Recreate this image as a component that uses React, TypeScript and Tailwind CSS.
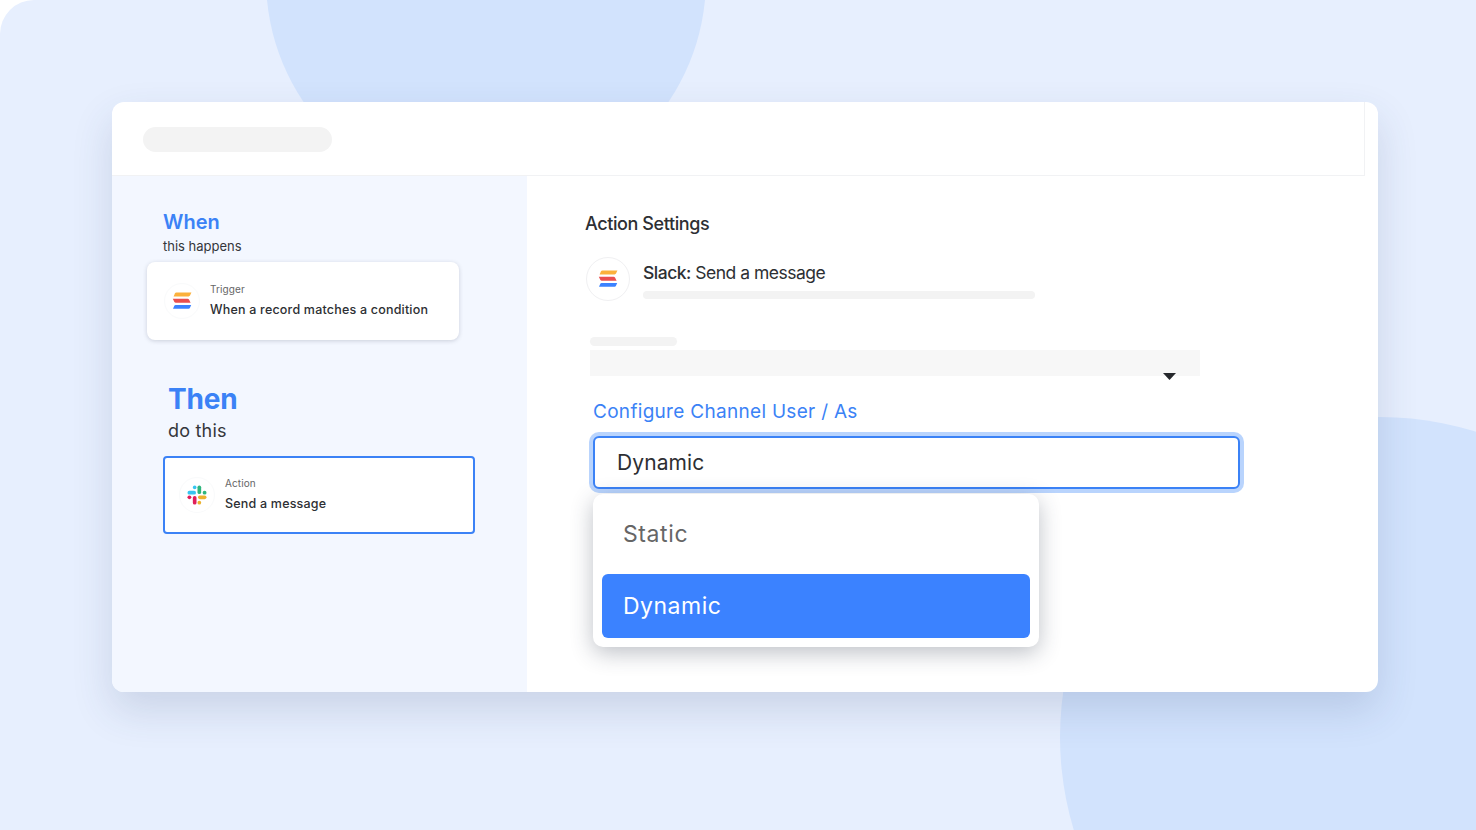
const font = { fontFamily: "Inter, 'Noto Sans', sans-serif" };

// three slanted stripes used as the trigger logo
const StripesLogo = ({ size }: { size: number }) => (
  <svg width={size} height={size} viewBox="0 0 20 20">
    <path d="M4.4 1.6 H19.4 L18 4.6 Q17.6 5.4 16.6 5.4 H1.6 L2.9 2.4 Q3.3 1.6 4.4 1.6Z" fill="#fbb13c" />
    <path d="M.8 7.8 H15.6 Q16.6 7.8 17 8.6 L18.6 11.8 H3.8 Q2.8 11.8 2.4 11 Z" fill="#ea4f4f" />
    <path d="M3.6 14 H19.2 L18 16.8 Q17.6 17.8 16.6 17.8 H1 L2.3 14.8 Q2.6 14 3.6 14Z" fill="#3b82ff" />
  </svg>
);

const SlackLogo = ({ size }: { size: number }) => (
  <svg width={size} height={size} viewBox="0 0 24 24" fill="none" strokeLinecap="round" strokeWidth="4.4">
    <path d="M2.8 9.2H8.6" stroke="#36c5f0" />
    <path d="M9.2 2.8V3" stroke="#36c5f0" />
    <path d="M14.8 2.8V8.6" stroke="#2eb67d" />
    <path d="M21.2 9.2H21" stroke="#2eb67d" />
    <path d="M15.4 14.8H21.2" stroke="#ecb22e" />
    <path d="M14.8 21.2V21" stroke="#ecb22e" />
    <path d="M9.2 15.4V21.2" stroke="#e01e5a" />
    <path d="M2.8 14.8H3" stroke="#e01e5a" />
  </svg>
);

const StepCard = ({
  label,
  title,
  icon,
  className,
}: {
  label: string;
  title: string;
  icon: React.ReactNode;
  className: string;
}) => (
  <div className={`flex items-center bg-white ${className}`}>
    <div className="flex h-9 w-9 shrink-0 items-center justify-center rounded-full border border-gray-50 bg-white">
      {icon}
    </div>
    <div className="ml-[10px] flex flex-col pb-[3px]">
      <span className="text-[10px] leading-[14px] tracking-[0.1px] text-[#666]">{label}</span>
      <span className="mt-[6px] text-[12.5px] leading-[16px] font-medium tracking-[0.2px] text-[#2d2f33]">{title}</span>
    </div>
  </div>
);

export default function App() {
  return (
    <div className="relative h-[830px] w-[1476px] overflow-hidden bg-white" style={font}>
      <div className="absolute inset-0 rounded-tl-[34px] bg-[#e7effe]" />
      <div className="absolute top-[-241px] left-[266px] h-[440px] w-[440px] rounded-full bg-[#d2e3fd]" />
      <div className="absolute top-[417px] left-[1060px] h-[640px] w-[640px] rounded-full bg-[#d2e3fd]" />

      <div className="relative pt-[102px] pl-[112px]">
        <div className="flex h-[590px] w-[1266px] flex-col overflow-hidden rounded-[12px] bg-white shadow-[0_18px_40px_rgba(50,70,110,0.16)]">
          <header className="mr-[13px] flex h-[74px] shrink-0 items-center border-r border-b border-[#f1f2f4] pt-[2px] pl-[31px]">
            <div className="h-[25px] w-[189px] rounded-full bg-[#f3f3f3]" />
          </header>

          <div className="flex min-h-0 flex-1">
            <aside className="w-[415px] shrink-0 bg-[#f3f7ff]">
              <div className="pt-[33px] pl-[51px]">
                <h2 className="text-[20px] leading-[26px] font-semibold text-[#3b82f6]">When</h2>
                <p className="mt-[3px] text-[13px] leading-[16px] text-[#33363b]">this happens</p>
              </div>
              <StepCard
                label="Trigger"
                title="When a record matches a condition"
                icon={<StripesLogo size={20} />}
                className="mt-[8px] ml-[35px] h-[78px] w-[312px] rounded-[8px] pl-[17px] shadow-[0_1px_4px_rgba(60,70,90,0.22)]"
              />
              <div className="mt-[42px] pl-[56px]">
                <h2 className="text-[28px] leading-[34px] font-bold tracking-[-0.2px] text-[#3b82f6]">Then</h2>
                <p className="mt-[4px] text-[18px] leading-[22px] tracking-[0.2px] text-[#33363b]">do this</p>
              </div>
              <StepCard
                label="Action"
                title="Send a message"
                icon={<SlackLogo size={20} />}
                className="mt-[14px] ml-[51px] h-[78px] w-[312px] rounded-[4px] border-2 border-[#3b82f6] pl-[14px]"
              />
            </aside>

            <main className="flex-1 pt-[36px] pl-[59px]">
              <h3 className="-ml-px text-[18px] leading-[24px] font-medium tracking-[-0.4px] text-[#2d2f33]">Action Settings</h3>

              <div className="mt-[21px] flex">
                <div className="flex h-[44px] w-[44px] items-center justify-center rounded-full border border-[#f0f0f2]">
                  <StripesLogo size={20} />
                </div>
                <div className="ml-[13px] pt-[4px]">
                  <p className="text-[17.5px] leading-[24px] tracking-[-0.5px] text-[#2d2f33]">
                    <span className="font-medium">Slack:</span> Send a message
                  </p>
                  <div className="mt-[6px] h-[8px] w-[392px] rounded-full bg-[#f3f3f3]" />
                </div>
              </div>

              <div className="mt-[36px] ml-[4px] h-[9px] w-[87px] rounded-full bg-[#f3f3f3]" />
              <div className="relative mt-[4px] ml-[4px] h-[26px] w-[610px] bg-[#f7f7f7]">
                <svg className="absolute top-[23px] left-[573px]" width="13" height="7" viewBox="0 0 13 7">
                  <path d="M0 0H13L6.5 7Z" fill="#26282c" />
                </svg>
              </div>

              <label className="mt-[23px] ml-[7px] block text-[19px] leading-[26px] tracking-[0.3px] text-[#3b82f6]">
                Configure Channel User / As
              </label>

              <div className="mt-[11px] ml-[7px] flex h-[53px] w-[647px] items-center rounded-[6px] border-2 border-[#3b82f6] bg-white pl-[22px] text-[21px] tracking-[0.1px] text-[#2d2f33] shadow-[0_0_0_4px_#b9d4fd]">
                Dynamic
              </div>

              <div className="relative mt-[5px] ml-[7px] flex h-[153px] w-[446px] flex-col rounded-[10px] bg-white px-[9px] shadow-[0_6px_22px_rgba(40,50,70,0.3)]">
                <div className="flex h-[80px] shrink-0 items-center pl-[21px] text-[23px] tracking-[0.6px] text-[#666]">
                  Static
                </div>
                <div className="flex h-[64px] shrink-0 items-center rounded-[6px] bg-[#3b82ff] pl-[21px] text-[23px] tracking-[0.5px] text-white">
                  Dynamic
                </div>
              </div>
            </main>
          </div>
        </div>
      </div>
    </div>
  );
}
